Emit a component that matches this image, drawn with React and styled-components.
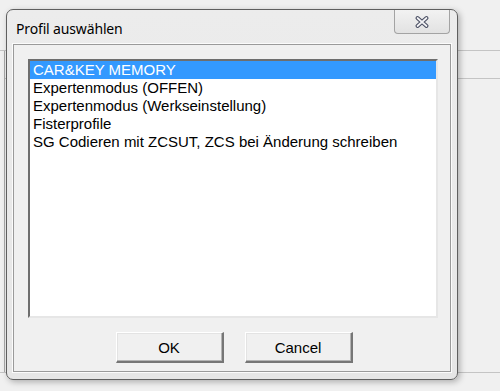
import React from 'react';
import styled, { createGlobalStyle } from 'styled-components';

const Global = createGlobalStyle`
    html, body {
        margin: 0;
        padding: 0;
        background: #f0f0f0;
    }
    body {
        font-family: 'Liberation Sans', Arial, sans-serif;
    }
`;

const Desktop = styled.div`
    position: relative;
    width: 500px;
    height: 391px;
    overflow: hidden;
    background: #f0f0f0;
    padding-top: 50px;
    box-sizing: border-box;
`;

const AppFrame = styled.div`
    display: flex;
    height: 323px;
    border-top: 1px solid #c4c4c4;
    border-bottom: 1px solid #c4c4c4;
    box-sizing: border-box;
`;

const SidePane = styled.div`
    width: 4px;
    border-right: 1px solid #a8a8a8;
`;

const MainPane = styled.div`
    flex: 1;
    display: flex;
    flex-direction: column;
`;

const ToolStrip = styled.div`
    height: 27px;
    border-bottom: 1px solid #c4c4c4;
`;

const Window = styled.div`
    position: absolute;
    left: 6px;
    top: 9px;
    width: 452px;
    height: 371px;
    box-sizing: border-box;
    display: flex;
    flex-direction: column;
    background: linear-gradient(#ececec, #e6e6e6);
    border: 1px solid #5f5f5f;
    border-radius: 7px;
    box-shadow: 2px 2px 6px rgba(0, 0, 0, 0.28);
    padding: 0 6px 7px 6px;
`;

const TitleBar = styled.div`
    height: 34px;
    display: flex;
    align-items: flex-start;
    justify-content: space-between;
`;

const Title = styled.div`
    font-family: 'Noto Sans', 'Open Sans', sans-serif;
    font-size: 14px;
    color: #000;
    padding: 9px 0 0 3px;
    letter-spacing: -0.15px;
`;

const CloseButton = styled.div`
    width: 56px;
    height: 24px;
    margin-right: 1px;
    box-sizing: border-box;
    border: 1px solid #a3a3a3;
    border-top: none;
    border-radius: 0 0 4px 4px;
    background: linear-gradient(#f2f2f2, #e2e2e2);
    display: flex;
    align-items: center;
    justify-content: center;
`;

const Client = styled.div`
    flex: 1;
    background: #f0f0f0;
    border: 1px solid #9a9a9a;
    box-shadow: 0 0 0 1px #fbfbfb;
    display: flex;
    flex-direction: column;
    padding: 14px 12px 7px 14px;
`;

const ListBox = styled.div`
    height: 259px;
    box-sizing: border-box;
    background: #fff;
    border-top: 2px solid #6e6e6e;
    border-left: 2px solid #6e6e6e;
    border-right: 2px solid #e6e6e6;
    border-bottom: 2px solid #e6e6e6;
`;

const Item = styled.div`
    height: 18px;
    line-height: 18px;
    font-size: 15px;
    padding-left: 3px;
    white-space: nowrap;
    background: ${p => (p.selected ? '#3399ff' : 'transparent')};
    color: ${p => (p.selected ? '#ffffff' : '#000000')};
`;

const ButtonRow = styled.div`
    display: flex;
    justify-content: center;
    gap: 21px;
    margin-top: 14px;
    padding-left: 2px;
`;

const Button = styled.div`
    width: 108px;
    height: 31px;
    box-sizing: border-box;
    background: #f0f0f0;
    border-top: 1px solid #ffffff;
    border-left: 1px solid #ffffff;
    border-right: 2px solid #767676;
    border-bottom: 2px solid #767676;
    box-shadow: inset -1px -1px 0 #b4b4b4, inset 1px 1px 0 #e3e3e3;
    font-size: 15px;
    color: #000;
    display: flex;
    align-items: center;
    justify-content: center;
`;

const items = [
    'CAR&KEY MEMORY',
    'Expertenmodus (OFFEN)',
    'Expertenmodus (Werkseinstellung)',
    'Fisterprofile',
    'SG Codieren mit ZCSUT, ZCS bei Änderung schreiben',
];

function CloseIcon() {
    return (
        <svg width="16" height="14" viewBox="0 0 16 14">
            <path d="M3.5 3 L12.5 11 M12.5 3 L3.5 11" stroke="#4a4f63" strokeWidth="4" strokeLinecap="round" />
            <path d="M3.5 3 L12.5 11 M12.5 3 L3.5 11" stroke="#f4f4f6" strokeWidth="1.7" strokeLinecap="round" />
        </svg>
    );
}

export default function App() {
    return (
        <Desktop>
            <Global />
            <AppFrame>
                <SidePane />
                <MainPane>
                    <ToolStrip />
                </MainPane>
            </AppFrame>
            <Window>
                <TitleBar>
                    <Title>Profil auswählen</Title>
                    <CloseButton>
                        <CloseIcon />
                    </CloseButton>
                </TitleBar>
                <Client>
                    <ListBox>
                        {items.map((t, i) => (
                            <Item key={t} selected={i === 0}>{t}</Item>
                        ))}
                    </ListBox>
                    <ButtonRow>
                        <Button>OK</Button>
                        <Button>Cancel</Button>
                    </ButtonRow>
                </Client>
            </Window>
        </Desktop>
    );
}
